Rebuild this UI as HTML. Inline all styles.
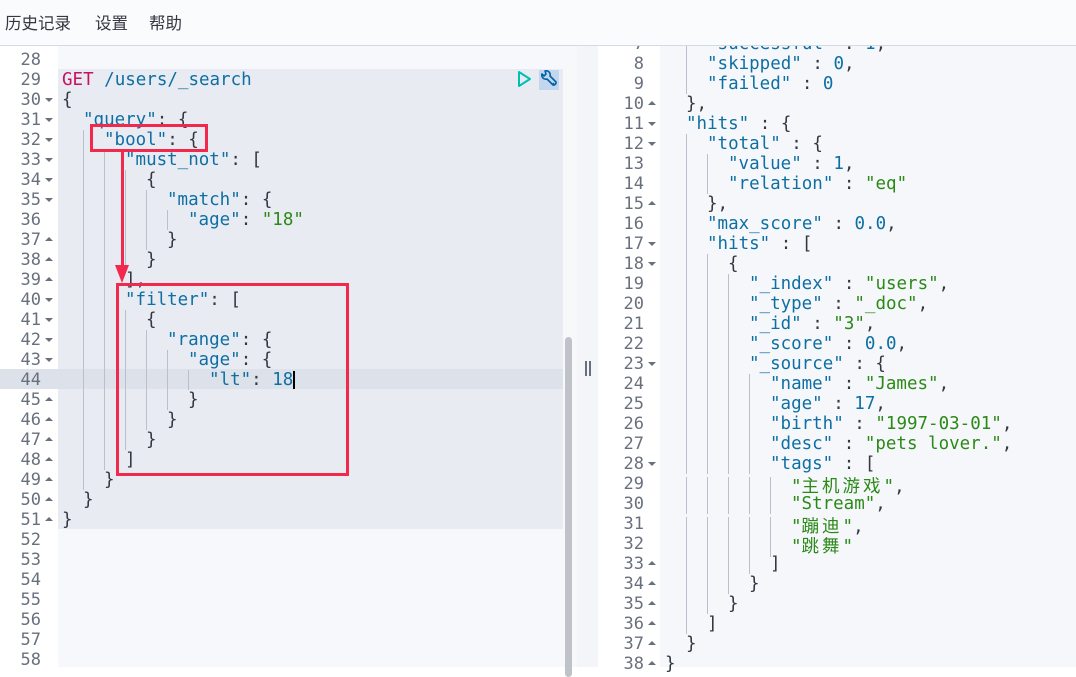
<!DOCTYPE html>
<html><head><meta charset="utf-8"><style>
*{margin:0;padding:0;box-sizing:border-box}
body{width:1076px;height:667px;overflow:hidden;background:#fff;position:relative;font-family:"DejaVu Sans Mono","Liberation Mono","Noto Sans CJK SC",monospace;font-size:17.5px;color:#343741}
.menu{position:absolute;left:0;top:0;width:1076px;height:46px;background:#fafbfd;border-bottom:1px solid #d3dae6;z-index:5;font-family:"Liberation Sans","Noto Sans CJK SC",sans-serif;font-size:16.5px;color:#343741}
.menu span{position:absolute;top:10px}
.l{position:absolute;height:20px;line-height:20px;white-space:pre;margin-top:1px}
.l i,.l b{display:inline-block;width:21px;height:20px;vertical-align:top}
.l b{border-left:1px solid #b9c0cc}
.n{position:absolute;height:20px;line-height:20px;text-align:right;color:#69707d;font-size:17px;margin-top:1px}
.f{position:absolute;width:0;height:0;border-left:4px solid transparent;border-right:4px solid transparent}
.d{border-top:4px solid #69707d}
.u{border-bottom:4px solid #69707d}
.k{color:#0e6fa3}.s{color:#2b8a17}.num{color:#0e6fa3}.m{color:#c5115f}
.c{letter-spacing:3px}
</style></head><body>
<div class="menu"><span style="left:5px">历史记录</span><span style="left:95px">设置</span><span style="left:149px">帮助</span></div>

<div style="position:absolute;left:58px;top:46px;width:505px;height:621px;background:#f7f8fb"></div>
<div style="position:absolute;left:58px;top:69px;width:505px;height:460px;background:#e8ebf2"></div>
<div style="position:absolute;left:0;top:369px;width:563px;height:20px;background:#dde1e9"></div>
<div style="position:absolute;left:563px;top:46px;width:14px;height:621px;background:#f7f8fa"></div>
<div style="position:absolute;left:565px;top:337px;width:7px;height:340px;background:#bfc3c9;border-radius:4px"></div>
<div style="position:absolute;left:577px;top:46px;width:21px;height:621px;background:#f3f5f8"></div>
<div style="position:absolute;left:585px;top:361px;width:2px;height:15px;background:#69707d"></div>
<div style="position:absolute;left:589px;top:361px;width:2px;height:15px;background:#69707d"></div>
<div style="position:absolute;left:660px;top:46px;width:416px;height:621px;background:#f5f7fa"></div>

<div class="n" style="left:0;width:41px;top:49px">28</div>
<div class="n" style="left:0;width:41px;top:69px">29</div>
<div class="n" style="left:0;width:41px;top:89px">30</div>
<div class="n" style="left:0;width:41px;top:109px">31</div>
<div class="n" style="left:0;width:41px;top:129px">32</div>
<div class="n" style="left:0;width:41px;top:149px">33</div>
<div class="n" style="left:0;width:41px;top:169px">34</div>
<div class="n" style="left:0;width:41px;top:189px">35</div>
<div class="n" style="left:0;width:41px;top:209px">36</div>
<div class="n" style="left:0;width:41px;top:229px">37</div>
<div class="n" style="left:0;width:41px;top:249px">38</div>
<div class="n" style="left:0;width:41px;top:269px">39</div>
<div class="n" style="left:0;width:41px;top:289px">40</div>
<div class="n" style="left:0;width:41px;top:309px">41</div>
<div class="n" style="left:0;width:41px;top:329px">42</div>
<div class="n" style="left:0;width:41px;top:349px">43</div>
<div class="n" style="left:0;width:41px;top:369px">44</div>
<div class="n" style="left:0;width:41px;top:389px">45</div>
<div class="n" style="left:0;width:41px;top:409px">46</div>
<div class="n" style="left:0;width:41px;top:429px">47</div>
<div class="n" style="left:0;width:41px;top:449px">48</div>
<div class="n" style="left:0;width:41px;top:469px">49</div>
<div class="n" style="left:0;width:41px;top:489px">50</div>
<div class="n" style="left:0;width:41px;top:509px">51</div>
<div class="n" style="left:0;width:41px;top:529px">52</div>
<div class="n" style="left:0;width:41px;top:549px">53</div>
<div class="n" style="left:0;width:41px;top:569px">54</div>
<div class="n" style="left:0;width:41px;top:589px">55</div>
<div class="n" style="left:0;width:41px;top:609px">56</div>
<div class="n" style="left:0;width:41px;top:629px">57</div>
<div class="n" style="left:0;width:41px;top:649px">58</div>
<div class="f d" style="left:45px;top:98px"></div>
<div class="f d" style="left:45px;top:118px"></div>
<div class="f d" style="left:45px;top:138px"></div>
<div class="f d" style="left:45px;top:158px"></div>
<div class="f d" style="left:45px;top:178px"></div>
<div class="f d" style="left:45px;top:198px"></div>
<div class="f u" style="left:45px;top:237px"></div>
<div class="f u" style="left:45px;top:257px"></div>
<div class="f u" style="left:45px;top:277px"></div>
<div class="f d" style="left:45px;top:298px"></div>
<div class="f d" style="left:45px;top:318px"></div>
<div class="f d" style="left:45px;top:338px"></div>
<div class="f d" style="left:45px;top:358px"></div>
<div class="f u" style="left:45px;top:397px"></div>
<div class="f u" style="left:45px;top:417px"></div>
<div class="f u" style="left:45px;top:437px"></div>
<div class="f u" style="left:45px;top:457px"></div>
<div class="f u" style="left:45px;top:477px"></div>
<div class="f u" style="left:45px;top:497px"></div>
<div class="f u" style="left:45px;top:517px"></div>

<div class="l" style="left:62px;top:69px"><span class="m">GET</span> <span class="k">/users/_search</span></div>
<div class="l" style="left:62px;top:89px">{</div>
<div class="l" style="left:62px;top:109px"><i></i><span class="k">"query"</span>: {</div>
<div class="l" style="left:62px;top:129px"><i></i><b></b><span class="k">"bool"</span>: {</div>
<div class="l" style="left:62px;top:149px"><i></i><b></b><b></b><span class="k">"must_not"</span>: [</div>
<div class="l" style="left:62px;top:169px"><i></i><b></b><b></b><b></b>{</div>
<div class="l" style="left:62px;top:189px"><i></i><b></b><b></b><b></b><b></b><span class="k">"match"</span>: {</div>
<div class="l" style="left:62px;top:209px"><i></i><b></b><b></b><b></b><b></b><b></b><span class="k">"age"</span>: <span class="s">"18"</span></div>
<div class="l" style="left:62px;top:229px"><i></i><b></b><b></b><b></b><b></b>}</div>
<div class="l" style="left:62px;top:249px"><i></i><b></b><b></b><b></b>}</div>
<div class="l" style="left:62px;top:269px"><i></i><b></b><b></b>],</div>
<div class="l" style="left:62px;top:289px"><i></i><b></b><b></b><span class="k">"filter"</span>: [</div>
<div class="l" style="left:62px;top:309px"><i></i><b></b><b></b><b></b>{</div>
<div class="l" style="left:62px;top:329px"><i></i><b></b><b></b><b></b><b></b><span class="k">"range"</span>: {</div>
<div class="l" style="left:62px;top:349px"><i></i><b></b><b></b><b></b><b></b><b></b><span class="k">"age"</span>: {</div>
<div class="l" style="left:62px;top:369px"><i></i><b></b><b></b><b></b><b></b><b></b><b></b><span class="k">"lt"</span>: <span class="num">18</span><span style="display:inline-block;width:2px;height:18px;background:#000;vertical-align:top;margin-top:1px"></span></div>
<div class="l" style="left:62px;top:389px"><i></i><b></b><b></b><b></b><b></b><b></b>}</div>
<div class="l" style="left:62px;top:409px"><i></i><b></b><b></b><b></b><b></b>}</div>
<div class="l" style="left:62px;top:429px"><i></i><b></b><b></b><b></b>}</div>
<div class="l" style="left:62px;top:449px"><i></i><b></b><b></b>]</div>
<div class="l" style="left:62px;top:469px"><i></i><b></b>}</div>
<div class="l" style="left:62px;top:489px"><i></i>}</div>
<div class="l" style="left:62px;top:509px">}</div>

<svg style="position:absolute;left:514px;top:69px" width="20" height="20" viewBox="0 0 20 20"><path d="M5 3 L16 10 L5 17 Z" fill="none" stroke="#00bfb3" stroke-width="2" stroke-linejoin="round"/></svg>
<div style="position:absolute;left:539px;top:70px;width:20px;height:20px;background:#c2d6ee"></div>
<svg style="position:absolute;left:539px;top:70px" width="20" height="20" viewBox="0 0 20 20"><path d="M3 4 A4 4 0 0 0 8 9 L14 15 A2.5 2.5 0 0 0 17 12 L11 6 A4 4 0 0 0 6 1 L7 4 L5 6 Z" fill="none" stroke="#0061a6" stroke-width="1.6" stroke-linejoin="round"/><circle cx="14.5" cy="13.5" r="0.9" fill="#0061a6"/></svg>

<div style="position:absolute;left:90px;top:124px;width:118px;height:28px;border:3px solid #f2284c"></div>
<div style="position:absolute;left:121px;top:152px;width:3px;height:118px;background:#f2284c"></div>
<div style="position:absolute;left:115px;top:265px;width:0;height:0;border-left:7.5px solid transparent;border-right:7.5px solid transparent;border-top:18px solid #f2284c"></div>
<div style="position:absolute;left:116px;top:283px;width:233px;height:193px;border:3px solid #f2284c"></div>

<div class="n" style="left:600px;width:44px;top:33px">7</div>
<div class="n" style="left:600px;width:44px;top:53px">8</div>
<div class="n" style="left:600px;width:44px;top:73px">9</div>
<div class="n" style="left:600px;width:44px;top:93px">10</div>
<div class="n" style="left:600px;width:44px;top:113px">11</div>
<div class="n" style="left:600px;width:44px;top:133px">12</div>
<div class="n" style="left:600px;width:44px;top:153px">13</div>
<div class="n" style="left:600px;width:44px;top:173px">14</div>
<div class="n" style="left:600px;width:44px;top:193px">15</div>
<div class="n" style="left:600px;width:44px;top:213px">16</div>
<div class="n" style="left:600px;width:44px;top:233px">17</div>
<div class="n" style="left:600px;width:44px;top:253px">18</div>
<div class="n" style="left:600px;width:44px;top:273px">19</div>
<div class="n" style="left:600px;width:44px;top:293px">20</div>
<div class="n" style="left:600px;width:44px;top:313px">21</div>
<div class="n" style="left:600px;width:44px;top:333px">22</div>
<div class="n" style="left:600px;width:44px;top:353px">23</div>
<div class="n" style="left:600px;width:44px;top:373px">24</div>
<div class="n" style="left:600px;width:44px;top:393px">25</div>
<div class="n" style="left:600px;width:44px;top:413px">26</div>
<div class="n" style="left:600px;width:44px;top:433px">27</div>
<div class="n" style="left:600px;width:44px;top:453px">28</div>
<div class="n" style="left:600px;width:44px;top:473px">29</div>
<div class="n" style="left:600px;width:44px;top:493px">30</div>
<div class="n" style="left:600px;width:44px;top:513px">31</div>
<div class="n" style="left:600px;width:44px;top:533px">32</div>
<div class="n" style="left:600px;width:44px;top:553px">33</div>
<div class="n" style="left:600px;width:44px;top:573px">34</div>
<div class="n" style="left:600px;width:44px;top:593px">35</div>
<div class="n" style="left:600px;width:44px;top:613px">36</div>
<div class="n" style="left:600px;width:44px;top:633px">37</div>
<div class="n" style="left:600px;width:44px;top:653px">38</div>
<div class="f u" style="left:648px;top:101px"></div>
<div class="f d" style="left:648px;top:122px"></div>
<div class="f d" style="left:648px;top:142px"></div>
<div class="f u" style="left:648px;top:201px"></div>
<div class="f d" style="left:648px;top:242px"></div>
<div class="f d" style="left:648px;top:262px"></div>
<div class="f d" style="left:648px;top:362px"></div>
<div class="f d" style="left:648px;top:462px"></div>
<div class="f u" style="left:648px;top:561px"></div>
<div class="f u" style="left:648px;top:581px"></div>
<div class="f u" style="left:648px;top:601px"></div>
<div class="f u" style="left:648px;top:621px"></div>
<div class="f u" style="left:648px;top:641px"></div>
<div class="f u" style="left:648px;top:661px"></div>

<div class="l" style="left:665px;top:33px"><i></i><b></b><span class="k">"successful"</span> : <span class="num">1</span>,</div>
<div class="l" style="left:665px;top:53px"><i></i><b></b><span class="k">"skipped"</span> : <span class="num">0</span>,</div>
<div class="l" style="left:665px;top:73px"><i></i><b></b><span class="k">"failed"</span> : <span class="num">0</span></div>
<div class="l" style="left:665px;top:93px"><i></i>},</div>
<div class="l" style="left:665px;top:113px"><i></i><span class="k">"hits"</span> : {</div>
<div class="l" style="left:665px;top:133px"><i></i><b></b><span class="k">"total"</span> : {</div>
<div class="l" style="left:665px;top:153px"><i></i><b></b><b></b><span class="k">"value"</span> : <span class="num">1</span>,</div>
<div class="l" style="left:665px;top:173px"><i></i><b></b><b></b><span class="k">"relation"</span> : <span class="s">"eq"</span></div>
<div class="l" style="left:665px;top:193px"><i></i><b></b>},</div>
<div class="l" style="left:665px;top:213px"><i></i><b></b><span class="k">"max_score"</span> : <span class="num">0.0</span>,</div>
<div class="l" style="left:665px;top:233px"><i></i><b></b><span class="k">"hits"</span> : [</div>
<div class="l" style="left:665px;top:253px"><i></i><b></b><b></b>{</div>
<div class="l" style="left:665px;top:273px"><i></i><b></b><b></b><b></b><span class="k">"_index"</span> : <span class="s">"users"</span>,</div>
<div class="l" style="left:665px;top:293px"><i></i><b></b><b></b><b></b><span class="k">"_type"</span> : <span class="s">"_doc"</span>,</div>
<div class="l" style="left:665px;top:313px"><i></i><b></b><b></b><b></b><span class="k">"_id"</span> : <span class="s">"3"</span>,</div>
<div class="l" style="left:665px;top:333px"><i></i><b></b><b></b><b></b><span class="k">"_score"</span> : <span class="num">0.0</span>,</div>
<div class="l" style="left:665px;top:353px"><i></i><b></b><b></b><b></b><span class="k">"_source"</span> : {</div>
<div class="l" style="left:665px;top:373px"><i></i><b></b><b></b><b></b><b></b><span class="k">"name"</span> : <span class="s">"James"</span>,</div>
<div class="l" style="left:665px;top:393px"><i></i><b></b><b></b><b></b><b></b><span class="k">"age"</span> : <span class="num">17</span>,</div>
<div class="l" style="left:665px;top:413px"><i></i><b></b><b></b><b></b><b></b><span class="k">"birth"</span> : <span class="s">"1997-03-01"</span>,</div>
<div class="l" style="left:665px;top:433px"><i></i><b></b><b></b><b></b><b></b><span class="k">"desc"</span> : <span class="s">"pets lover."</span>,</div>
<div class="l" style="left:665px;top:453px"><i></i><b></b><b></b><b></b><b></b><span class="k">"tags"</span> : [</div>
<div class="l" style="left:665px;top:476px"><i></i><b></b><b></b><b></b><b></b><b></b><span class="s">"<span class="c">主机游戏</span>"</span>,</div>
<div class="l" style="left:665px;top:493px"><i></i><b></b><b></b><b></b><b></b><b></b><span class="s">"Stream"</span>,</div>
<div class="l" style="left:665px;top:516px"><i></i><b></b><b></b><b></b><b></b><b></b><span class="s">"<span class="c">蹦迪</span>"</span>,</div>
<div class="l" style="left:665px;top:536px"><i></i><b></b><b></b><b></b><b></b><b></b><span class="s">"<span class="c">跳舞</span>"</span></div>
<div class="l" style="left:665px;top:553px"><i></i><b></b><b></b><b></b><b></b>]</div>
<div class="l" style="left:665px;top:573px"><i></i><b></b><b></b><b></b>}</div>
<div class="l" style="left:665px;top:593px"><i></i><b></b><b></b>}</div>
<div class="l" style="left:665px;top:613px"><i></i><b></b>]</div>
<div class="l" style="left:665px;top:633px"><i></i>}</div>
<div class="l" style="left:665px;top:653px">}</div>
</body></html>
